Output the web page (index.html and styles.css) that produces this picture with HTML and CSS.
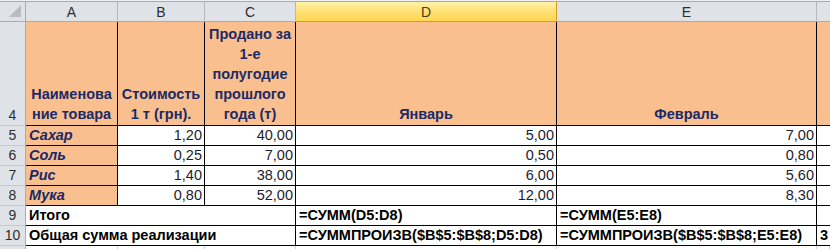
FILE: index.html
```html
<!DOCTYPE html>
<html>
<head>
<meta charset="utf-8">
<link rel="stylesheet" href="styles.css">
</head>
<body>
<div class="sheet">
  <div class="hd corner"><svg class="tri" width="14" height="14" viewBox="0 0 14 14"><polygon points="13,1 13,13 1,13" fill="#b9bdc3"/></svg></div>
  <div class="hd col">A</div>
  <div class="hd col">B</div>
  <div class="hd col">C</div>
  <div class="hd col sel">D</div>
  <div class="hd col">E</div>
  <div class="hd col last"></div>

  <div class="rh">4</div>
  <div class="c org bk head">Наименова<br>ние товара</div>
  <div class="c org bk head">Стоимость<br>1 т (грн).</div>
  <div class="c org bk head">Продано за<br>1-е<br>полугодие<br>прошлого<br>года (т)</div>
  <div class="c org bk head">Январь</div>
  <div class="c org bk head">Февраль</div>
  <div class="c org bkb"></div>

  <div class="rh">5</div>
  <div class="c org bk name">Сахар</div>
  <div class="c bk num">1,20</div>
  <div class="c bk num">40,00</div>
  <div class="c bk num">5,00</div>
  <div class="c bk num">7,00</div>
  <div class="c bkb"></div>

  <div class="rh">6</div>
  <div class="c org bk name">Соль</div>
  <div class="c bk num">0,25</div>
  <div class="c bk num">7,00</div>
  <div class="c bk num">0,50</div>
  <div class="c bk num">0,80</div>
  <div class="c bkb"></div>

  <div class="rh">7</div>
  <div class="c org bk name">Рис</div>
  <div class="c bk num">1,40</div>
  <div class="c bk num">38,00</div>
  <div class="c bk num">6,00</div>
  <div class="c bk num">5,60</div>
  <div class="c bkb"></div>

  <div class="rh">8</div>
  <div class="c org bk name">Мука</div>
  <div class="c bk num">0,80</div>
  <div class="c bk num">52,00</div>
  <div class="c bk num">12,00</div>
  <div class="c bk num">8,30</div>
  <div class="c bkb"></div>

  <div class="rh">9</div>
  <div class="c bk lbl span3">Итого</div>
  <div class="c bk lbl">=СУММ(D5:D8)</div>
  <div class="c bk lbl">=СУММ(E5:E8)</div>
  <div class="c bkb"></div>

  <div class="rh">10</div>
  <div class="c bk lbl span3">Общая сумма реализации</div>
  <div class="c bk lbl">=СУММПРОИЗВ($B$5:$B$8;D5:D8)</div>
  <div class="c bk lbl">=СУММПРОИЗВ($B$5:$B$8;E5:E8)</div>
  <div class="c bkb lbl">3</div>

  <div class="rh"></div>
  <div class="c"></div>
  <div class="c"></div>
  <div class="c"></div>
  <div class="c"></div>
  <div class="c"></div>
  <div class="c"></div>
</div>
</body>
</html>
```

FILE: styles.css
```css
html, body {
  margin: 0;
  padding: 0;
  background: #ffffff;
}

.sheet {
  width: 830px;
  height: 249px;
  overflow: hidden;
  display: grid;
  grid-template-columns: 26px 92px 87px 91px 261px 260px 13px;
  grid-template-rows: 21px 104px repeat(6, 20px) 20px;
  padding-top: 1px;
  background: #eef0f3;
  font-family: "Liberation Sans", Arial, sans-serif;
}

.sheet > div {
  box-sizing: border-box;
  overflow: hidden;
  white-space: nowrap;
}

.hd {
  background: #dfe3e8;
  border-top: 1px solid #a8acb2;
  border-bottom: 1px solid #a8acb2;
  border-right: 1px solid #b4b8be;
  font-size: 14px;
  color: #2e2e2e;
  display: flex;
  align-items: center;
  justify-content: center;
}

.corner {
  position: relative;
  border-right-color: #a8acb2;
}

.tri {
  position: absolute;
  right: 3px;
  bottom: 3px;
}

.sel {
  background: linear-gradient(#fff2a8, #ffe070 55%, #ffd64f);
  border-top-color: #d9a53a;
  border-bottom-color: #d39a2c;
  border-right-color: #d39a2c;
  color: #4a3a1a;
}

.hd.last {
  border-right: none;
}

.rh {
  background: #dfe3e8;
  border-right: 1px solid #a8acb2;
  border-bottom: 1px solid #c6cad0;
  font-size: 14px;
  color: #2e2e2e;
  display: flex;
  align-items: flex-end;
  justify-content: center;
  line-height: 19px;
}

.c {
  background: #ffffff;
  border-right: 1px solid #d4d4d4;
  border-bottom: 1px solid #d4d4d4;
  font-size: 14.5px;
  line-height: 19px;
  display: flex;
  align-items: flex-end;
}

.org {
  background: #fabf8f;
}

.bk {
  border-right: 1px solid #000000;
  border-bottom: 1px solid #000000;
}

.bkb {
  border-right: none;
  border-bottom: 1px solid #000000;
}

.head {
  font-weight: bold;
  color: #1b2a66;
  text-align: center;
  justify-content: center;
  line-height: 20px;
  padding-bottom: 1px;
}

.name {
  font-weight: bold;
  font-style: italic;
  color: #1b2a66;
  padding-left: 3px;
}

.num {
  justify-content: flex-end;
  padding-right: 2px;
  color: #1c1c2e;
}

.lbl {
  font-weight: bold;
  color: #000000;
  padding-left: 3px;
}

.span3 {
  grid-column: span 3;
}
```
